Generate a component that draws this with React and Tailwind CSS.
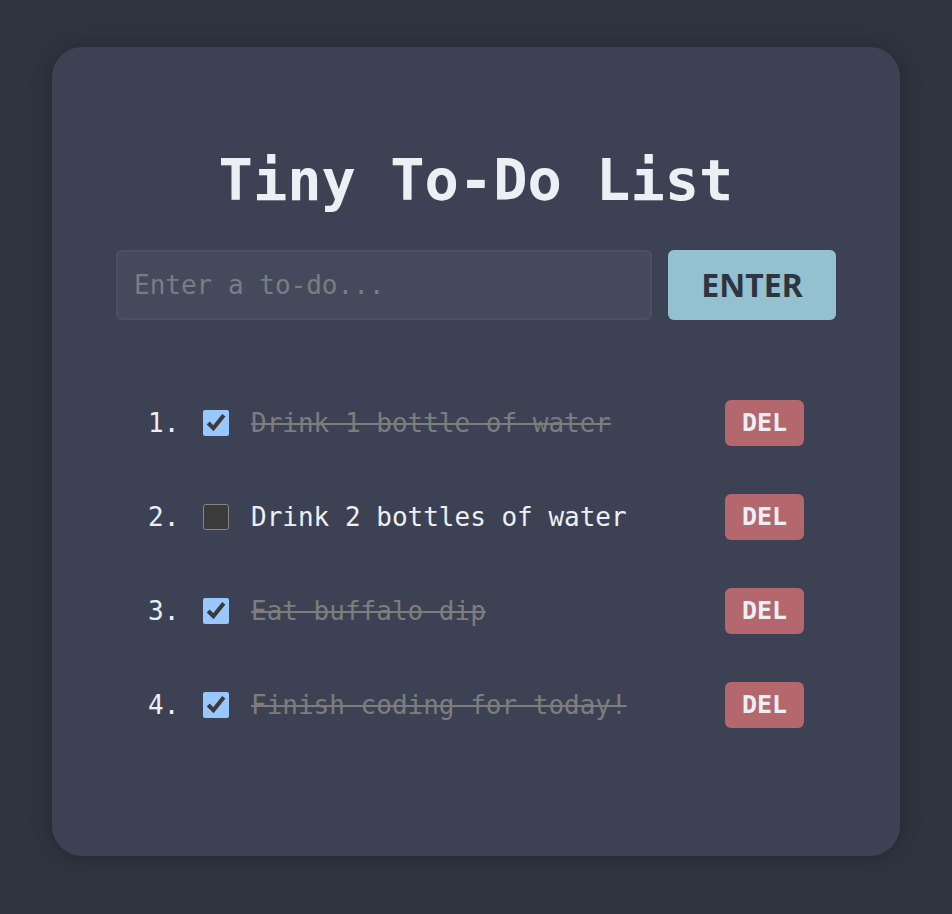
import React, { useState } from 'react';

const initialTodos = [
  { text: 'Drink 1 bottle of water', done: true },
  { text: 'Drink 2 bottles of water', done: false },
  { text: 'Eat buffalo dip', done: true },
  { text: 'Finish coding for today!', done: true },
];

const App = () => {
  const [todos, setTodos] = useState(initialTodos);
  const [draft, setDraft] = useState('');

  // Add a new to-do from the input
  const addTodo = () => {
    if (!draft.trim()) return;
    setTodos([...todos, { text: draft.trim(), done: false }]);
    setDraft('');
  };

  const toggleTodo = (index) => {
    setTodos(todos.map((todo, i) => (i === index ? { ...todo, done: !todo.done } : todo)));
  };

  const deleteTodo = (index) => {
    setTodos(todos.filter((_, i) => i !== index));
  };

  return (
    <div className="min-h-[914px] bg-[#2f3440] pt-[47px] px-[52px] scheme-dark font-['DejaVu_Sans_Mono',monospace]">
      <div className="h-[809px] rounded-[30px] bg-[#3c4253] shadow-[0_0_24px_rgba(0,0,0,0.25)] px-16 pt-[105px]">
        <h1 className="text-center text-[57px] font-bold leading-none text-[#eceff4]">Tiny To-Do List</h1>

        <div className="mt-[41px] flex gap-4">
          <input
            className="h-[70px] flex-1 rounded-md border-2 border-[#4b5163] bg-[#444a5c] px-4 text-[26px] text-[#eceff4] placeholder-[#7b7d82] outline-none"
            placeholder="Enter a to-do..."
            value={draft}
            onChange={(e) => setDraft(e.target.value)}
            onKeyDown={(e) => e.key === 'Enter' && addTodo()}
          />
          <button
            className="h-[70px] w-[168px] rounded-md bg-[#93c1d0] font-['Noto_Sans',sans-serif] text-[32px] font-bold text-[#2e3440]"
            onClick={addTodo}
          >
            ENTER
          </button>
        </div>

        <ul className="mt-[80px] flex flex-col gap-12 px-8">
          {todos.map((todo, index) => (
            <li key={index} className="flex h-[46px] items-center text-[26px] text-[#eceff4]">
              <span className="w-[55px]">{index + 1}.</span>
              <input
                type="checkbox"
                className="m-0 h-[26px] w-[26px]"
                checked={todo.done}
                onChange={() => toggleTodo(index)}
              />
              <span className={`ml-[22px] ${todo.done ? 'text-[#7d7d7d] line-through' : ''}`}>{todo.text}</span>
              <button
                className="ml-auto h-[46px] w-[79px] rounded-md bg-[#b4676c] text-[25px] font-bold text-[#eceff4]"
                onClick={() => deleteTodo(index)}
              >
                DEL
              </button>
            </li>
          ))}
        </ul>
      </div>
    </div>
  );
};

export default App;
